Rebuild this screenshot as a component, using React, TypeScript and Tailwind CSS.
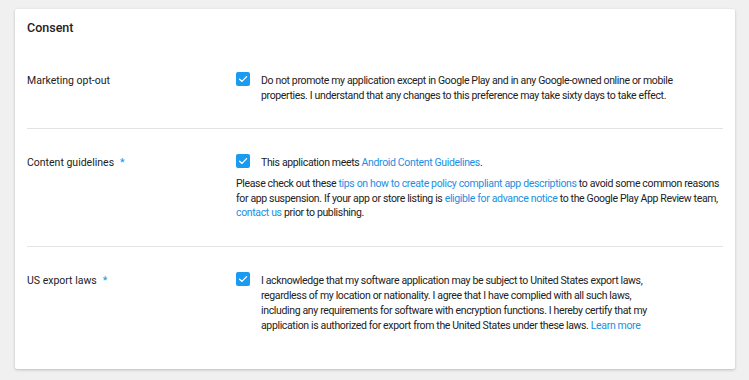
import React from 'react';

const Check = () => (
  <span className="mt-[-1px] flex h-[14px] w-[14px] shrink-0 items-center justify-center rounded-[2px] bg-[#1a9bf0]">
    <svg width="10" height="10" viewBox="0 0 10 10" fill="none">
      <path d="M1.6 5.2 L4 7.4 L8.6 2.6" stroke="white" strokeWidth="1.3" strokeLinecap="round" strokeLinejoin="round" />
    </svg>
  </span>
);

const A = ({ children }: { children: React.ReactNode }) => (
  <a href="#" className="text-[#1a8fe3]">
    {children}
  </a>
);

const Req = () => <span className="ml-[6px] text-[#1a8fe3]">*</span>;

function Row({
  label,
  children,
  last,
}: {
  label: React.ReactNode;
  children: React.ReactNode;
  last?: boolean;
}) {
  return (
    <div className={last ? 'flex pt-[26px] pb-[36px]' : 'flex border-b border-[#e3e3e3] pt-[26px] pb-[25px]'}>
      <div className="w-[209px] shrink-0 text-[10.5px] leading-[15px]">{label}</div>
      <div className="flex-1 tracking-[-0.35px]">{children}</div>
    </div>
  );
}

export default function App() {
  return (
    <div
      className="h-[380px] w-[749px] bg-[#f0f0f0] pl-[15px] pt-[9px] text-[10.5px] text-[#222]"
      style={{ fontFamily: 'Roboto, "Liberation Sans", sans-serif' }}
    >
      <div className="w-[720px] rounded-[2px] bg-white px-3 pt-[10px] shadow-[0_1px_3px_rgba(0,0,0,0.22)]">
        <h2 className="text-[12.5px] leading-[18px] font-medium text-[#222]">Consent</h2>

        <div className="pt-[10px]">
          <Row label="Marketing opt-out">
            <div className="flex gap-[11px]">
              <Check />
              <p className="whitespace-nowrap leading-[15px]">
                Do not promote my application except in Google Play and in any Google-owned online or mobile
                <br />
                properties. I understand that any changes to this preference may take sixty days to take effect.
              </p>
            </div>
          </Row>

          <Row
            label={
              <>
                Content guidelines
                <Req />
              </>
            }
          >
            <div className="flex gap-[11px]">
              <Check />
              <p className="whitespace-nowrap leading-[15px]">
                This application meets <A>Android Content Guidelines</A>.
              </p>
            </div>
            <p className="mt-[7px] whitespace-nowrap leading-[14.5px]">
              Please check out these <A>tips on how to create policy compliant app descriptions</A> to avoid some common reasons
              <br />
              for app suspension. If your app or store listing is <A>eligible for advance notice</A> to the Google Play App Review team,
              <br />
              <A>contact us</A> prior to publishing.
            </p>
          </Row>

          <Row
            last
            label={
              <>
                US export laws
                <Req />
              </>
            }
          >
            <div className="flex gap-[11px]">
              <Check />
              <p className="whitespace-nowrap leading-[15px]">
                I acknowledge that my software application may be subject to United States export laws,
                <br />
                regardless of my location or nationality. I agree that I have complied with all such laws,
                <br />
                including any requirements for software with encryption functions. I hereby certify that my
                <br />
                application is authorized for export from the United States under these laws. <A>Learn more</A>
              </p>
            </div>
          </Row>
        </div>
      </div>
    </div>
  );
}
